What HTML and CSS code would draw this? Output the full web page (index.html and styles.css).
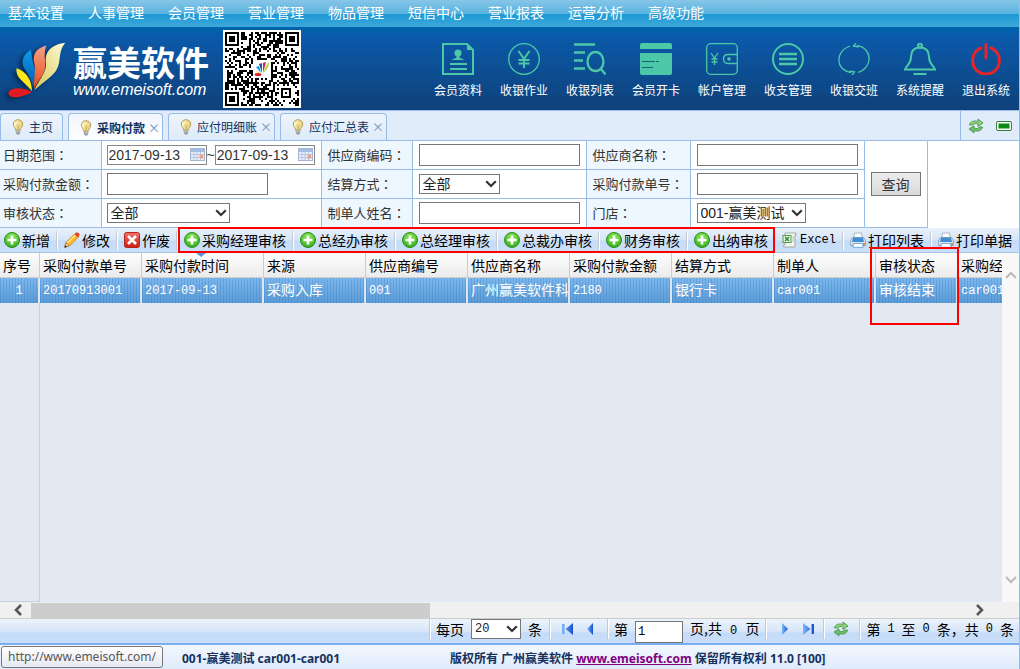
FILE: index.html
```html
<!DOCTYPE html>
<html lang="zh-CN">
<head>
<meta charset="utf-8">
<title>赢美软件 - 采购付款</title>
<link rel="stylesheet" href="styles.css">
</head>
<body>
<svg class="defs" aria-hidden="true">
  <defs>
    <radialGradient id="gGreen" cx="50%" cy="30%" r="70%"><stop offset="0" stop-color="#8fec5a"/><stop offset="1" stop-color="#35ad1f"/></radialGradient>
    <linearGradient id="gRed" x1="0" y1="0" x2="0" y2="1"><stop offset="0" stop-color="#f0776a"/><stop offset="1" stop-color="#c81e14"/></linearGradient>
    <linearGradient id="gBulb" x1="0" y1="0" x2="1" y2="0"><stop offset="0" stop-color="#fffbd0"/><stop offset="1" stop-color="#e8d070"/></linearGradient>
    <linearGradient id="gBlue" x1="0" y1="0" x2="1" y2="0"><stop offset="0" stop-color="#7db8ff"/><stop offset="1" stop-color="#1450cc"/></linearGradient>
    <linearGradient id="pWhite" x1="1" y1="0" x2="0" y2="1"><stop offset="0" stop-color="#fffbd8"/><stop offset="1" stop-color="#d6c755"/></linearGradient>
    <linearGradient id="pOrange" x1="0" y1="0" x2="0" y2="1"><stop offset="0" stop-color="#f3a283"/><stop offset="1" stop-color="#ea4a1c"/></linearGradient>
    <linearGradient id="pBlue" x1="0" y1="0" x2="0" y2="1"><stop offset="0" stop-color="#0a9be6"/><stop offset="1" stop-color="#0a5cb4"/></linearGradient>
  </defs>
  <symbol id="flame" viewBox="24 124 178 172">
    <path d="M52 205C50 235 70 240 98 272C98 245 85 215 52 205Z" fill="#ffe81a"/>
    <path d="M95 150C70 165 65 185 75 205C90 225 98 245 101 262C106 240 112 220 102 190C97 175 97 165 95 150Z" fill="url(#pBlue)"/>
    <path d="M141 137C110 145 98 165 105 190C110 215 103 240 104 265C120 235 140 220 138 190C134 165 136 150 141 137Z" fill="url(#pOrange)"/>
    <path d="M197 129C150 135 135 160 140 190C143 215 115 245 105 270C140 238 172 225 178 190C183 165 180 150 197 129Z" fill="url(#pWhite)"/>
    <path d="M98 275C70 258 30 262 28 278C28 297 70 293 98 275Z" fill="#e01b22"/>
  </symbol>
  <symbol id="bulb" viewBox="0 0 16 16">
    <path d="M8 .7C5.200.7 3.300 2.700 3.300 5.200C3.300 7.500 5.500 8.600 5.700 11H10.300C10.500 8.600 12.700 7.500 12.700 5.200C12.700 2.700 10.800.7 8 .7Z" fill="url(#gBulb)" stroke="#b79b55"/>
    <path d="M7 5.500L7.500 10.500M9 5.500L8.500 10.500" stroke="#c9a84a" stroke-width=".7" fill="none"/>
    <path d="M5.700 11.500H10.300V14L9 15.500H7L5.700 14Z" fill="#8f959b"/><path d="M5.700 13H10.300" stroke="#ddd" stroke-width=".8"/>
  </symbol>
  <symbol id="add" viewBox="0 0 16 16"><circle cx="8" cy="8" r="7.500" fill="url(#gGreen)" stroke="#2c8a1c"/><path d="M8 3.500V12.500M3.500 8H12.500" stroke="#fff" stroke-width="2.600"/></symbol>
  <symbol id="pencil" viewBox="0 0 16 16"><path d="M.5 15.500L2 10.500L5.500 14Z" fill="#f2d2a4" stroke="#8a5a1a" stroke-width=".7"/><path d="M.5 15.500L1.200 13L3 14.800Z" fill="#333"/><path d="M2 10.500L10.500 2L14 5.500L5.500 14Z" fill="#fdb924" stroke="#c57a10" stroke-width=".7"/><path d="M3.500 11L11.500 3" stroke="#ffe88c" stroke-width="1.300"/><path d="M10.500 2C12 .2 14 .2 15 1.300C16 2.400 15.600 4 14 5.500Z" fill="#e2452c"/></symbol>
  <symbol id="cancel" viewBox="0 0 16 16"><rect x=".5" y=".5" width="15" height="15" rx="2" fill="url(#gRed)" stroke="#b3241a"/><path d="M4 4L12 12M12 4L4 12" stroke="#fff" stroke-width="2.600"/></symbol>
  <symbol id="excel" viewBox="0 0 16 16"><path d="M3 1H14V3H13V15H2C1 15 1 13 2 13H3Z" fill="#f4f6f0" stroke="#909c88" stroke-width=".8"/><rect x="1" y="3.500" width="8" height="7" fill="#eef8ea" stroke="#4d9a45"/><path d="M3 5L7 9M7 5L3 9" stroke="#2c8a2c" stroke-width="1.500"/><path d="M10.500 5H12M10.500 7H12M10.500 9H12" stroke="#aab"/></symbol>
  <symbol id="print" viewBox="0 0 16 16"><path d="M4 6L4.500 1H11.500L12 6Z" fill="#fff" stroke="#9aa8b8" stroke-width=".8"/><path d="M.7 8L2.500 5.500H13.500L15.300 8V13.500H.7Z" fill="#dfe5ec" stroke="#8593a4" stroke-width=".8"/><path d="M3 5.500H13L14 10H2Z" fill="#3e8fd4"/><path d="M3.500 11.500H12.500L13.200 15.300H2.800Z" fill="#fff" stroke="#5598cf" stroke-width=".8"/><circle cx="14" cy="12" r="1" fill="#e76d32"/></symbol>
  <symbol id="refresh" viewBox="0 0 16 16"><path d="M1.500 7C2 3.500 6 2 10 3.500V1L15 5L10 8.500V6C8 5 5.500 5.300 4.500 7Z" fill="#8fd07e" stroke="#3f8f3f" stroke-width=".8"/><path d="M14.500 9C14 12.500 10 14 6 12.500V15L1 11L6 7.800V10C8 11 10.500 10.700 11.500 9Z" fill="#6cc06a" stroke="#3f8f3f" stroke-width=".8"/></symbol>
  <symbol id="cal" viewBox="0 0 16 14"><rect x=".5" y=".5" width="14" height="12" fill="#e8effa" stroke="#a5b6d4"/><path d="M1 1H14V4H1Z" fill="#a3bde4"/><path d="M1 6.500H14M1 9.500H14M4 4V12M7 4V12M10.500 4V12" stroke="#b8c6de"/><rect x="9.500" y="7" width="3.500" height="3.500" fill="#f0a184"/></symbol>
  <symbol id="chev" viewBox="0 0 12 8"><path d="M1.200 1.200L6 6L10.800 1.200" fill="none" stroke="#333" stroke-width="2.200"/></symbol>
</svg>

<div class="page">
  <nav class="menu">
    <a href="#">基本设置</a><a href="#">人事管理</a><a href="#">会员管理</a><a href="#">营业管理</a><a href="#">物品管理</a><a href="#">短信中心</a><a href="#">营业报表</a><a href="#">运营分析</a><a href="#">高级功能</a>
  </nav>

  <header class="banner">
    <svg class="flame"><use href="#flame"/></svg>
    <div class="brand"><span class="brand-name">赢美软件</span><span class="brand-url">www.emeisoft.com</span></div>
    <div class="qr"><svg viewBox="0 0 39 39" shape-rendering="crispEdges" role="img" aria-label="二维码"><rect width="39" height="39" fill="#fff"/><path id="qr-modules"/><rect x="15" y="15" width="9" height="9" fill="#fff"/></svg>
      <svg class="qr-mark" viewBox="0 0 16 16"><path d="M2 6L5 5L7 12Z" fill="#00a0e0"/><path d="M5 3L8 2L8 12Z" fill="#2b50b8"/><path d="M9 2L12 1L9 12Z" fill="#e5135e"/><path d="M15 1C15 6 13 9 9 12C11 7 12 3 15 1Z" fill="#b8dc50"/><path d="M2 9L7 13L4 12Z" fill="#ffd800"/><ellipse cx="4" cy="13.500" rx="3.500" ry="1.500" fill="#e01b22"/></svg></div>
    <div class="shortcuts">
      <a href="#"><svg viewBox="0 0 32 32"><path d="M1 1H25L31 7V31H1Z"/><path class="f" d="M25 1L31 7H25Z"/><circle class="f" cx="16" cy="10" r="3.500"/><path class="f" d="M14.500 12H17.500V14.500L22.500 17H9.500L14.500 14.500Z"/><path d="M8 21H25M8 26H25"/></svg>会员资料</a>
      <a href="#"><svg viewBox="0 0 32 32"><circle class="thin" cx="16" cy="16" r="15.300"/><path d="M10.500 8L16 16L21.500 8M16 16V25M10.500 17H21.500M10.500 20.500H21.500"/></svg>收银作业</a>
      <a href="#"><svg viewBox="0 0 32 32"><path class="bar" d="M0 1.500H21M0 9.500H11M0 17.500H9M0 25.500H11"/><ellipse class="bar" cx="21.500" cy="18.500" rx="8" ry="9.500"/><path class="bar" d="M27 26L31.500 31.500"/></svg>收银列表</a>
      <a href="#"><svg viewBox="0 0 32 32"><path class="f" d="M2 0H30Q32 0 32 2V6H0V2Q0 0 2 0ZM0 10H32V30Q32 32 30 32H2Q0 32 0 30Z"/><path class="slot" d="M2 18.500H15M16 18.500H19M2 24.500H13"/></svg>会员开卡</a>
      <a href="#"><svg viewBox="0 0 32 32"><rect class="thin" x=".7" y=".7" width="30.600" height="30.600" rx="4"/><path class="thin" d="M5 10L8.500 15L12 10M8.500 15V22M5.500 16H11.500M5.500 19H11.500M31 11.500H22C16 11.500 16 20.500 22 20.500H31"/><circle class="f" cx="23" cy="16" r="1.800"/></svg>帐户管理</a>
      <a href="#"><svg viewBox="0 0 32 32"><circle cx="16" cy="16" r="15"/><path class="bar" d="M7 11H25M7 16H25M7 21H25"/></svg>收支管理</a>
      <a href="#"><svg viewBox="0 0 32 32"><path class="thin" d="M12 3C-3 8-3 27 13 29.500M11.500 28L16.500 29L14 32M20 29.500C35 25 35 5 19 2.700M20.500 4L15.500 3L18 0"/></svg>收银交班</a>
      <a href="#"><svg viewBox="0 0 32 32"><circle cx="16" cy="2.700" r="2"/><path d="M16 4.500C9 4.500 7 9 7 14C7 21 2.500 22 1 26.500H31C29.500 22 25 21 25 14C25 9 23 4.500 16 4.500ZM9.500 31H22.500"/></svg>系统提醒</a>
      <a href="#"><svg class="power" viewBox="0 0 32 32"><path d="M11 5C-2 10 .5 31 16 31C31.500 31 34 10 21 5M16 1.500V15"/></svg>退出系统</a>
    </div>
  </header>

  <div class="tabbar">
    <div class="tab home"><svg class="ic"><use href="#bulb"/></svg><button type="button">主页</button></div>
    <div class="tab active"><svg class="ic"><use href="#bulb"/></svg><button type="button">采购付款</button><button type="button" class="close" aria-label="关闭">×</button></div>
    <div class="tab"><svg class="ic"><use href="#bulb"/></svg><button type="button">应付明细账</button><button type="button" class="close" aria-label="关闭">×</button></div>
    <div class="tab"><svg class="ic"><use href="#bulb"/></svg><button type="button">应付汇总表</button><button type="button" class="close" aria-label="关闭">×</button></div>
    <div class="tab-tools">
      <button type="button" aria-label="刷新"><svg class="ic"><use href="#refresh"/></svg></button>
      <button type="button" aria-label="全屏"><svg class="ic" viewBox="0 0 16 16"><rect x=".5" y="3.500" width="15" height="9" rx="1.500" fill="#fff" stroke="#3c7a3c"/><rect x="2.500" y="5.500" width="11" height="5" fill="#0c8a14"/></svg></button>
    </div>
  </div>

  <form class="filter">
    <table>
      <tr>
        <th><label for="d1">日期范围<i lang="zh-TW">：</i></label></th>
        <td class="c2"><div class="range"><span class="date"><input id="d1" type="text" value="2017-09-13"><svg><use href="#cal"/></svg></span>~<span class="date"><input type="text" value="2017-09-13" aria-label="结束日期"><svg><use href="#cal"/></svg></span></div></td>
        <th class="c3"><label for="f2">供应商编码<i lang="zh-TW">：</i></label></th><td class="c4"><input id="f2" type="text"></td>
        <th class="c5"><label for="f3">供应商名称<i lang="zh-TW">：</i></label></th><td class="c4"><input id="f3" type="text"></td>
        <td class="go" rowspan="3"><button type="button">查询</button></td>
      </tr>
      <tr>
        <th><label for="f4">采购付款金额<i lang="zh-TW">：</i></label></th><td class="c2"><input id="f4" type="text"></td>
        <th><label for="f5">结算方式<i lang="zh-TW">：</i></label></th><td><span class="sel sel-s"><select id="f5"><option>全部</option></select><svg><use href="#chev"/></svg></span></td>
        <th><label for="f6">采购付款单号<i lang="zh-TW">：</i></label></th><td><input id="f6" type="text"></td>
      </tr>
      <tr>
        <th><label for="f7">审核状态<i lang="zh-TW">：</i></label></th><td class="c2"><span class="sel sel-l"><select id="f7"><option>全部</option></select><svg><use href="#chev"/></svg></span></td>
        <th><label for="f8">制单人姓名<i lang="zh-TW">：</i></label></th><td><input id="f8" type="text"></td>
        <th><label for="f9">门店<i lang="zh-TW">：</i></label></th><td><span class="sel sel-m"><select id="f9"><option>001-赢美测试</option></select><svg><use href="#chev"/></svg></span></td>
      </tr>
    </table>
  </form>

  <div class="toolbar">
    <button type="button"><svg class="ic"><use href="#add"/></svg>新增</button>
    <button type="button"><svg class="ic"><use href="#pencil"/></svg>修改</button>
    <button type="button"><svg class="ic"><use href="#cancel"/></svg>作废</button>
    <div class="audit">
      <button type="button"><svg class="ic"><use href="#add"/></svg>采购经理审核</button>
      <button type="button"><svg class="ic"><use href="#add"/></svg>总经办审核</button>
      <button type="button"><svg class="ic"><use href="#add"/></svg>总经理审核</button>
      <button type="button"><svg class="ic"><use href="#add"/></svg>总裁办审核</button>
      <button type="button"><svg class="ic"><use href="#add"/></svg>财务审核</button>
      <button type="button"><svg class="ic"><use href="#add"/></svg>出纳审核</button>
    </div>
    <button type="button" class="mono"><svg class="ic"><use href="#excel"/></svg>Excel</button>
    <button type="button"><svg class="ic"><use href="#print"/></svg>打印列表</button>
    <button type="button"><svg class="ic"><use href="#print"/></svg>打印单据</button>
  </div>

  <main class="grid">
    <div class="grid-view">
      <table>
        <colgroup><col class="w-no"><col class="w"><col class="w-date"><col class="w"><col class="w"><col class="w"><col class="w"><col class="w"><col class="w"><col class="w-state"><col class="w"></colgroup>
        <thead><tr><th>序号</th><th>采购付款单号</th><th class="sorted">采购付款时间</th><th>来源</th><th>供应商编号</th><th>供应商名称</th><th>采购付款金额</th><th>结算方式</th><th>制单人</th><th>审核状态</th><th>采购经</th></tr></thead>
        <tbody><tr><td>1</td><td>20170913001</td><td>2017-09-13</td><td>采购入库</td><td>001</td><td>广州赢美软件科</td><td>2180</td><td>银行卡</td><td>car001</td><td>审核结束</td><td>car001</td></tr></tbody>
      </table>
      <div class="grid-rest"></div>
    </div>
    <div class="vscroll"><svg viewBox="0 0 12 8"><path d="M1 7L6 2L11 7"/></svg><svg viewBox="0 0 12 8"><path d="M1 1L6 6L11 1"/></svg></div>
    <div class="mark"></div>
  </main>
  <div class="hscroll"><svg viewBox="0 0 8 12"><path d="M7 1L2 6L7 11"/></svg><div class="track"><div class="thumb"></div></div><svg viewBox="0 0 8 12"><path d="M1 1L6 6L1 11"/></svg></div>

  <div class="pager">
    <div class="cell"><label for="ps">每页</label><span class="sel sel-p"><select id="ps"><option>20</option></select><svg><use href="#chev"/></svg></span>条</div>
    <div class="cell nav"><button type="button" aria-label="首页"><svg viewBox="0 0 12 12"><path fill="url(#gBlue)" d="M0 1H2.500V11H0ZM11 0V12L3.500 6Z"/></svg></button><button type="button" aria-label="上一页"><svg viewBox="0 0 12 12"><path fill="url(#gBlue)" d="M7 0V12L1 6Z"/></svg></button></div>
    <div class="cell page-no"><label for="pn">第</label><input id="pn" type="text" value="1"><span>页,共 <b>0</b> 页</span></div>
    <div class="cell nav"><button type="button" aria-label="下一页"><svg viewBox="0 0 12 12"><path fill="url(#gBlue)" d="M4 0V12L10 6Z"/></svg></button><button type="button" aria-label="末页"><svg viewBox="0 0 12 12"><path fill="url(#gBlue)" d="M12 1H9.500V11H12ZM1 0V12L8.500 6Z"/></svg></button></div>
    <div class="cell re"><button type="button" aria-label="刷新"><svg class="ic"><use href="#refresh"/></svg></button></div>
    <div class="cell total"><span>第</span><b>1</b><span>至</span><b>0</b><span>条，共</span><b>0</b><span>条</span></div>
  </div>

  <footer class="status">
    <span class="url-tip">http://www.emeisoft.com/</span>
    <span class="user">001-赢美测试 car001-car001</span>
    <span>版权所有 广州赢美软件 <a href="#">www.emeisoft.com</a> 保留所有权利 11.0 [100]</span>
  </footer>
</div>
<script src="qr.js"></script>
</body>
</html>
```

FILE: qr.js
```js
// Fills the QR tile: 37 modules with three finder squares and one alignment square.
(function () {
  var size = 37, seed = 20170913, d = "";
  function rnd() { seed = (seed * 1103515245 + 12345) % 2147483648; return seed / 2147483648; }
  function square(x, y, ox, oy, n) {
    var dx = x - ox, dy = y - oy;
    if (dx < -1 || dy < -1 || dx > n || dy > n) return null;
    var m = Math.min(dx, dy, n - 1 - dx, n - 1 - dy);
    return m >= 0 && m !== 1;
  }
  for (var y = 0; y < size; y++) {
    for (var x = 0; x < size; x++) {
      var on = rnd() > 0.5;
      [[0, 0, 7], [30, 0, 7], [0, 30, 7], [28, 28, 5]].forEach(function (s) {
        var v = square(x, y, s[0], s[1], s[2]);
        if (v !== null) on = v;
      });
      if (on) d += "M" + (x + 1) + " " + (y + 1) + "h1v1h-1z";
    }
  }
  document.getElementById("qr-modules").setAttribute("d", d);
})();
```

FILE: styles.css
```css
* { box-sizing: border-box; }
body { margin: 0; font-family: "Liberation Sans", "Noto Sans CJK SC", sans-serif; font-size: 14px; line-height: 20px; color: #000; }
a { color: inherit; text-decoration: none; }
button { margin: 0; padding: 0; border: 0; background: none; font: inherit; color: inherit; }
svg { display: block; flex: none; }
.defs { position: absolute; width: 0; height: 0; }
.ic { width: 16px; height: 16px; }
.page { display: flex; flex-direction: column; min-height: 100vh; border-right: 1px solid #99bbe8; overflow: hidden; }

.menu { display: flex; gap: 24px; height: 27px; padding: 2px 8px; color: #fff; margin-right: -1px; font-family: "Noto Sans CJK SC", sans-serif;
  background: linear-gradient(#86c6e8 0, #58b2df 14px, #1c98d4 14px, #3fa8da 27px); }

.banner { display: flex; height: 83px; padding-left: 7px; color: #fff;
  background: linear-gradient(#0062ab 0, #0062ab 5px, #0b5aab 8px, #0e4179 100%); }
.flame { width: 60px; height: 60px; margin-top: 13px; filter: drop-shadow(-3px 2px 2px #062a55); }
.brand { display: flex; flex-direction: column; width: 138px; margin: 16px 0 0 6px; white-space: nowrap; }
.brand-name { font: bold 34px/38px "Noto Sans CJK SC", sans-serif; }
.brand-url { font: italic 16px/18px "Liberation Sans", sans-serif; }
.qr { position: relative; margin: 3px 0 0 12px; width: 78px; height: 78px; }
.qr-mark { position: absolute; left: 31px; top: 31px; width: 16px; height: 16px; }
.shortcuts { display: flex; margin-left: auto; }
.shortcuts a { display: flex; flex-direction: column; align-items: center; gap: 5px; width: 66px; padding-top: 16px; font: 12px/20px "Noto Sans CJK SC", sans-serif; }
.shortcuts svg { width: 32px; height: 32px; fill: none; stroke: #4cc8a8; stroke-width: 2; }
.shortcuts .thin { stroke-width: 1.3; }
.shortcuts .bar { stroke-width: 2.3; }
.shortcuts .f { fill: #4cc8a8; stroke: none; }
.shortcuts .slot { stroke: #17666f; stroke-width: 1.2; }
.shortcuts .power { stroke: #e52528; stroke-width: 3; stroke-linecap: round; }

.tabbar { display: flex; gap: 5px; height: 31px; padding-top: 2px; border-top: 1px solid #99bbe8; border-bottom: 1px solid #99bbe8; background: #e0ecfa; font: 12px/20px "Noto Sans CJK SC", sans-serif; color: #15305c; }
.tab { display: flex; align-items: center; gap: 3px; height: 27px; padding: 0 6px 0 9px; border: 1px solid #99bbe8; border-bottom: 0; border-radius: 4px 4px 0 0; background: linear-gradient(#edf4fc, #dfebf9); }
.tab.home { padding-right: 9px; }
.tab.active { background: linear-gradient(#f0f6fd, #fff); height: 29px; font-weight: bold; }
.tab .close { width: 8px; font-weight: normal; color: #6a8fc4; }
.tab-tools { display: flex; align-items: center; gap: 12px; width: 59px; margin: -2px 0 0 auto; padding-left: 7px; border-left: 1px solid #99bbe8; }

.filter { background: #fff; color: #333; }
.filter table { border-collapse: collapse; table-layout: fixed; width: 928px; margin-top: -1px; }
.filter th, .filter td { height: 29px; padding: 0 6px; border: 1px solid #99bbe8; text-align: left; font-weight: normal; }
.filter th { width: 101px; padding: 0 0 0 6px; background: #eef6fe; font: 13px/20px "Noto Sans CJK SC", sans-serif; }
.filter th:first-child { padding-left: 3px; border-left: 0; }
.filter i { font-style: normal; font-family: "Noto Sans CJK TC", sans-serif; }
.filter .c2 { width: 220px; padding: 0 5px; }
.filter .c3 { width: 91px; }
.filter .c4 { width: 174px; }
.filter .c5 { width: 104px; }
.go button { width: 50px; height: 24px; border: 1px solid #777; background: linear-gradient(#ececec, #dadada); font-family: "Noto Sans CJK SC", sans-serif; }
.filter input, .pager input { display: block; width: 161px; height: 22px; padding: 0 2px; border: 1px solid #777; background: #fff; font: 14px "Liberation Sans", sans-serif; color: #333; }
.range { display: flex; align-items: center; }
.date { display: flex; align-items: center; width: 100px; height: 20px; border: 1px solid #888; }
.filter .date input { flex: 1; width: 0; min-width: 0; height: 18px; padding: 0 1px; border: 0; }
.date svg { width: 16px; height: 14px; }
.sel { display: block; position: relative; height: 20px; }
.sel select { display: block; width: 100%; height: 100%; padding: 0 3px; appearance: none; border: 1px solid #777; border-radius: 0; background: #fff; font: 14px/18px "Liberation Sans", "Noto Sans CJK SC", sans-serif; color: #222; }
.sel svg { position: absolute; right: 3px; top: 6px; width: 12px; height: 8px; pointer-events: none; }
.sel-s { width: 81px; }
.sel-m { width: 109px; }
.sel-l { width: 123px; }
.sel-p { width: 50px; }

.toolbar { display: flex; align-items: center; height: 25px; padding-left: 4px; background: linear-gradient(#e9f1fb, #d5e4f7 50%, #c5dcf8 55%, #cbdff8); border-bottom: 1px solid #a9c4e8; font-family: "Noto Sans CJK SC", sans-serif; white-space: nowrap; }
.toolbar button { display: flex; align-items: center; gap: 2px; margin-right: 7px; padding-right: 6px; border-right: 1px solid #c4c9d0; box-shadow: 1px 0 #fff; height: 19px; }
.toolbar > button:last-child, .audit button:last-child { border-color: transparent; box-shadow: none; }
.toolbar .mono { font-family: "Liberation Mono", monospace; font-size: 12px; }
.audit { display: flex; position: relative; }
.audit::after { content: ""; position: absolute; inset: -4px 7px -3px -6px; border: 2px solid #f00; z-index: 2; pointer-events: none; }

.grid { position: relative; display: flex; flex: 1; min-height: 120px; background: #e2e9f3; }
.grid-view { flex: 1; min-width: 0; overflow: hidden; display: flex; flex-direction: column; }
.grid table { width: 1060px; flex: none; table-layout: fixed; border-collapse: separate; border-spacing: 0; font: 14px/20px "Noto Sans CJK SC", sans-serif; }
.w-no { width: 40px; }
.w { width: 102px; }
.w-date { width: 122px; }
.w-state { width: 82px; }
.grid th, .grid td { height: 25px; padding: 0 0 0 3px; border-right: 1px solid #ccc; text-align: left; font-weight: normal; white-space: nowrap; overflow: hidden; }
.grid th { position: relative; background: linear-gradient(#fbfbfb, #f5f5f5 50%, #ebebeb); border-bottom: 1px solid #d0d0d0; }
.sorted::after { content: ""; position: absolute; left: 54px; top: 0; border: 5px solid transparent; border-top: 4px solid #5a96d6; border-bottom: 0; }
.grid td { border-right: 2px solid #dfe6f0; color: #fff; font-family: "Liberation Mono", "Noto Sans CJK SC", monospace; font-size: 12px;
  background: repeating-linear-gradient(90deg, rgba(40, 110, 180, .25) 0 1px, transparent 1px 3px), linear-gradient(#7db8ee, #5b9bd6); }
.grid td:nth-child(4), .grid td:nth-child(6), .grid td:nth-child(8), .grid td:nth-child(10) { font-size: 14px; }
.grid td:first-child { text-align: center; padding: 0; }
.grid-rest { flex: 1; width: 40px; border-right: 1px solid #c8ced8; border-bottom: 1px solid #c8ced8; }
.vscroll { display: flex; flex-direction: column; justify-content: space-between; align-items: center; width: 17px; padding: 18px 0; background: #f8f8f8; }
.vscroll svg { width: 12px; height: 8px; fill: none; stroke: #bbb; stroke-width: 2; }
.mark { position: absolute; left: 870px; top: -6px; width: 89px; height: 78px; border: 2px solid #f00; z-index: 3; }
.hscroll { display: flex; align-items: center; height: 17px; padding: 1px 35px 1px 14px; background: #f0f0f0; border-bottom: 1px solid #ccc; }
.hscroll svg { width: 8px; height: 12px; fill: none; stroke: #555; stroke-width: 2.5; }
.track { flex: 1; height: 15px; margin: 0 9px; }
.thumb { width: 42.6%; height: 100%; background: #cdcdcd; }

.pager { display: flex; justify-content: flex-end; height: 26px; padding-right: 5px; border-bottom: 2px solid #7aaeee; background: linear-gradient(#ecf3fb, #d8e6f8 50%, #c5dcf8 60%, #c8ddf8); font: 14px/20px "Noto Sans CJK SC", sans-serif; white-space: nowrap; }
.cell { display: flex; align-items: center; height: 20px; border-left: 1px solid #c4c9d0; box-shadow: inset 1px 0 #fff; }
.cell:first-child { gap: 7px; padding: 0 7px 0 6px; }
.nav { gap: 12px; padding: 0 12px; width: 58px; }
.nav button svg { width: 12px; height: 12px; }
.page-no { gap: 7px; padding: 0 6px; }
.page-no input { width: 48px; height: 22px; margin-top: 6px; font: 12px "Liberation Mono", monospace; color: #000; }
.pager select { font: 12px "Liberation Mono", monospace; }
.pager b { margin: 0 3px; font: 12px/20px "Liberation Mono", monospace; }
.pager .page-no b { margin: 0 5px; }
.re { padding: 0 9px; width: 36px; }
.total { gap: 4px; padding-left: 6px; }

.status { position: relative; display: flex; align-items: center; height: 24px; padding: 4px 0 0 182px; background: linear-gradient(#f2f7fe, #dfebfb); font: bold 12px/18px "Noto Sans", "Noto Sans CJK SC", sans-serif; color: #15305c; white-space: nowrap; }
.user { width: 268px; }
.status a { color: #800080; text-decoration: underline; }
.url-tip { position: absolute; left: 1px; top: 1px; height: 22px; padding: 0 6px; border: 1px solid #777; border-radius: 3px; background: linear-gradient(#fff, #e6e8f2); font: 12px/20px "Noto Sans", sans-serif; color: #575757; }
```
